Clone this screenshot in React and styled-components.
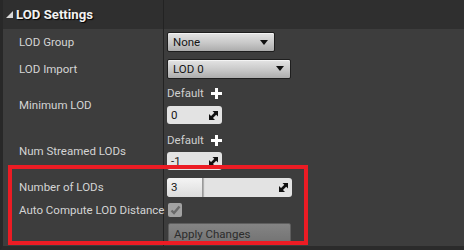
import React from "react";
import styled, { createGlobalStyle } from "styled-components";

const GlobalStyle = createGlobalStyle`
  html, body {
    margin: 0;
    padding: 0;
    background: #3d3d3d;
  }
  body {
    font-family: Roboto, "Liberation Sans", sans-serif;
  }
`;

const Panel = styled.div`
  position: relative;
  width: 464px;
  height: 250px;
  box-sizing: border-box;
  background: #3d3d3d;
  border-left: 3px solid #282828;
  border-bottom: 4px solid #2b2b2b;
  overflow: hidden;
`;

const Row = styled.div`
  display: grid;
  grid-template-columns: 161px 1fr;
  height: ${(p) => p.$h}px;
  background: ${(p) => (p.$header ? "#2f2f2f" : "transparent")};
`;

const LabelCell = styled.div`
  box-sizing: border-box;
  border-right: 1px solid #232323;
  display: flex;
  align-items: center;
  padding-left: 16px;
  font-size: 11.5px;
  color: #d4d4d4;
  white-space: nowrap;
`;

const HeaderCell = styled(LabelCell)`
  padding-left: 3px;
  gap: 3px;
  font-size: 13.2px;
  font-weight: 700;
  color: #f2f2f2;
  text-shadow: 1px 1px 1px #000;
`;

const ValueCell = styled.div`
  display: flex;
  flex-direction: column;
  justify-content: ${(p) => (p.$top ? "flex-start" : "center")};
  align-items: flex-start;
  padding-left: 3px;
  padding-top: ${(p) => p.$pt || 0}px;
  gap: ${(p) => p.$gap || 0}px;
`;

const Dropdown = styled.div`
  box-sizing: border-box;
  width: ${(p) => p.$w}px;
  height: 20px;
  display: flex;
  align-items: center;
  justify-content: space-between;
  padding: 0 6px 0 5px;
  border: 1px solid #1e1e1e;
  border-radius: 2px;
  background: linear-gradient(#e4e4e4, #c8c8c8 55%, #acacac);
  box-shadow: inset 0 1px 0 rgba(255, 255, 255, 0.6);
  font-size: 11.5px;
  color: #151515;
`;

const Arrow = styled.span`
  width: 0;
  height: 0;
  border-left: 4px solid transparent;
  border-right: 4px solid transparent;
  border-top: 5px solid #111;
`;

const DefaultLine = styled.div`
  height: 18px;
  display: flex;
  align-items: center;
  gap: 7px;
  font-size: 11.5px;
  color: #cfcfcf;
`;

const NumberBox = styled.div`
  position: relative;
  box-sizing: border-box;
  width: ${(p) => p.$w}px;
  height: ${(p) => p.$hgt || 18}px;
  display: flex;
  align-items: center;
  justify-content: space-between;
  padding: 0 4px 0 4px;
  border-radius: 3px;
  background: #e3e3e3;
  font-size: 11.5px;
  color: #161616;
  overflow: hidden;
`;

const SliderFill = styled.div`
  position: absolute;
  left: 0;
  top: 0;
  bottom: 0;
  width: ${(p) => p.$w}px;
  background: linear-gradient(#f4f4f4, #dcdcdc);
  border-right: 1px solid #9a9a9a;
  box-shadow: 1px 0 1px rgba(0, 0, 0, 0.25);
  border-radius: 3px 0 0 3px;
`;

const BoxText = styled.span`
  position: relative;
`;

const Checkbox = styled.div`
  margin-left: 1px;
  width: 14px;
  height: 14px;
  border-radius: 2px;
  background: #a2a2a2;
  display: flex;
  align-items: center;
  justify-content: center;
`;

const ApplyButton = styled.div`
  box-sizing: border-box;
  margin-left: 1px;
  width: 123px;
  height: 22px;
  display: flex;
  align-items: center;
  padding-left: 5px;
  border: 1px solid #5e5e5e;
  border-radius: 2px;
  background: linear-gradient(#848484, #727272);
  font-size: 11.5px;
  color: #2c2c2c;
`;

const Annotation = styled.div`
  position: absolute;
  left: 5px;
  top: 165px;
  width: 300px;
  height: 80px;
  box-sizing: border-box;
  border: 4.5px solid #ec1c24;
  pointer-events: none;
`;

function DragIcon() {
  return (
    <svg width="9" height="9" viewBox="0 0 9 9" style={{ position: "relative" }}>
      <polygon points="3.5,0 9,0 9,5.5" fill="#111" />
      <polygon points="0,3 0,9 6,9" fill="#111" />
      <line x1="2" y1="7" x2="7" y2="2" stroke="#111" strokeWidth="2.6" />
    </svg>
  );
}

function Plus() {
  return (
    <svg width="11" height="11" viewBox="0 0 11 11">
      <rect x="4" y="0" width="3" height="11" fill="#fff" />
      <rect x="0" y="4" width="11" height="3" fill="#fff" />
    </svg>
  );
}

function Collapse() {
  return (
    <svg width="7" height="7" viewBox="0 0 7 7">
      <polygon points="7,0 7,7 0,7" fill="#d8d8d8" />
    </svg>
  );
}

function Check() {
  return (
    <svg width="11" height="10" viewBox="0 0 11 10">
      <polyline points="1.5,5.5 4,8 9.5,1.5" fill="none" stroke="#6a6a6a" strokeWidth="2.4" />
    </svg>
  );
}

export default function App() {
  return (
    <>
      <GlobalStyle />
      <Panel>
        <Row $h={29} $header>
          <HeaderCell>
            <Collapse />
            <span>LOD Settings</span>
          </HeaderCell>
          <ValueCell />
        </Row>
        <Row $h={26}>
          <LabelCell>LOD Group</LabelCell>
          <ValueCell>
            <Dropdown $w={108}>
              None <Arrow />
            </Dropdown>
          </ValueCell>
        </Row>
        <Row $h={27}>
          <LabelCell>LOD Import</LabelCell>
          <ValueCell>
            <Dropdown $w={124}>
              LOD 0 <Arrow />
            </Dropdown>
          </ValueCell>
        </Row>
        <Row $h={46}>
          <LabelCell>Minimum LOD</LabelCell>
          <ValueCell $top $pt={2} $gap={4}>
            <DefaultLine>
              Default <Plus />
            </DefaultLine>
            <NumberBox $w={55}>
              0 <DragIcon />
            </NumberBox>
          </ValueCell>
        </Row>
        <Row $h={46}>
          <LabelCell>Num Streamed LODs</LabelCell>
          <ValueCell $top $pt={3} $gap={3}>
            <DefaultLine>
              Default <Plus />
            </DefaultLine>
            <NumberBox $w={55}>
              -1 <DragIcon />
            </NumberBox>
          </ValueCell>
        </Row>
        <Row $h={26}>
          <LabelCell>Number of LODs</LabelCell>
          <ValueCell>
            <NumberBox $w={125} $hgt={19}>
              <SliderFill $w={35} />
              <BoxText>3</BoxText>
              <DragIcon />
            </NumberBox>
          </ValueCell>
        </Row>
        <Row $h={20}>
          <LabelCell>Auto Compute LOD Distance</LabelCell>
          <ValueCell>
            <Checkbox>
              <Check />
            </Checkbox>
          </ValueCell>
        </Row>
        <Row $h={26}>
          <LabelCell />
          <ValueCell $top $pt={3}>
            <ApplyButton>Apply Changes</ApplyButton>
          </ValueCell>
        </Row>
        <Annotation />
      </Panel>
    </>
  );
}
